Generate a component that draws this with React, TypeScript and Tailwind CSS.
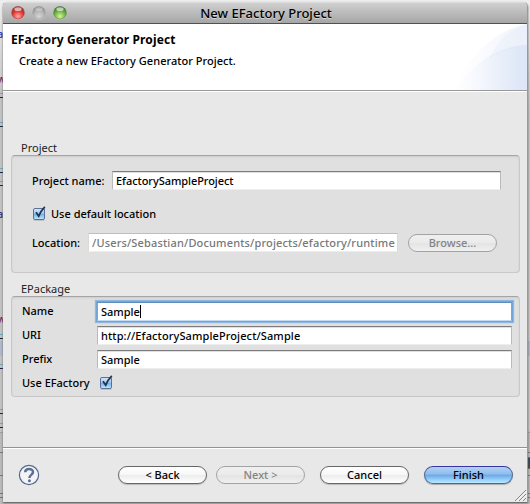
import type { ReactNode } from "react";

function Light({ kind }: { kind: "red" | "gray" | "green" }) {
  const tones = {
    red: ["#8f2d2b", "#e23b37", "#ffaaa0"],
    gray: ["#8d8d8d", "#b5b5b5", "#d6d6d6"],
    green: ["#3f6f2b", "#70b544", "#d8f59a"],
  }[kind];
  return (
    <svg width="15" height="15" viewBox="0 0 15 15">
      <defs>
        <radialGradient id={kind} cx="50%" cy="78%" r="75%">
          <stop offset="0" stopColor={tones[2]} />
          <stop offset="0.55" stopColor={tones[1]} />
          <stop offset="1" stopColor={tones[0]} />
        </radialGradient>
      </defs>
      <circle cx="8" cy="8.3" r="6.8" fill="#e4e4e4" opacity="0.7" />
      <circle cx="8" cy="7.8" r="6.4" fill={`url(#${kind})`} stroke={tones[0]} strokeOpacity="0.65" strokeWidth="0.8" />
      <ellipse cx="8" cy="4.2" rx="3.6" ry="1.9" fill="#fff" opacity={kind === "gray" ? 0.3 : 0.6} />
    </svg>
  );
}

function Check() {
  return (
    <svg width="15" height="16" viewBox="0 0 15 16" className="shrink-0">
      <defs>
        <linearGradient id="aqua" x1="0" y1="0" x2="0" y2="1">
          <stop offset="0" stopColor="#d9eafa" />
          <stop offset="0.45" stopColor="#9cc8f2" />
          <stop offset="0.5" stopColor="#6eaee9" />
          <stop offset="1" stopColor="#c0f0ff" />
        </linearGradient>
      </defs>
      <rect x="1.5" y="2.5" width="11" height="11" rx="1.5" fill="url(#aqua)" stroke="#5b6f9a" />
      <path d="M1.5 14.3h11" stroke="#777" strokeWidth="0.7" opacity="0.5" />
      <path d="M4 6.2 6.7 10.2Q9 4.5 12.8 0.8" fill="none" stroke="#22344f" strokeWidth="1.8" />
    </svg>
  );
}

function Field({ children, width = "", state = "normal" }: { children: ReactNode; width?: string; state?: "normal" | "focus" | "disabled" }) {
  const look = {
    normal: "border-x-[#b9b9b9] border-t-[#7c7c7c] border-b-[#eeeeee] shadow-[inset_0_1px_0_#e0e0e0]",
    focus: "relative border-x-[#79a6d6] border-t-[#5f8fc0] border-b-[#c3dbf2] shadow-[0_0_0_1px_#74a5d8,0_0_1px_2px_#8fb8e3]",
    disabled: "border-x-[#dadada] border-t-[#bebebe] border-b-[#ededed] text-[#777]",
  }[state];
  return (
    <div className={`flex h-[19px] items-center overflow-hidden border bg-white pl-[3px] whitespace-nowrap ${look} ${width}`}>
      {children}
    </div>
  );
}

function Button({ children, disabled = false, primary = false }: { children: ReactNode; disabled?: boolean; primary?: boolean }) {
  const look = primary
    ? "border-[#4d6692] border-t-[#36369f] bg-[linear-gradient(#b3d1f3_0%,#8fbcee_45%,#68a8e6_50%,#a5dbff_88%,#bceaff_100%)] text-black shadow-[0_1px_1px_#aaa]"
    : disabled
      ? "border-[#a3a3a3] bg-[linear-gradient(#efefef_0%,#ebebeb_47%,#e3e3e3_50%,#f0f0f0_100%)] text-[#848484]"
      : "border-[#666] bg-[linear-gradient(#ffffff_0%,#f7f7f7_47%,#ececec_50%,#ffffff_100%)] text-black shadow-[0_1px_1px_#bbb]";
  return (
    <div className={`flex h-[18px] w-[89px] shrink-0 items-center justify-center rounded-full border ${look}`}>
      {children}
    </div>
  );
}

const groupBox =
  "rounded-[4px] border border-[#c8c8c8] border-t-[#a5a5a5] bg-[#e0e0e0] shadow-[inset_0_1px_2px_#cccccc]";

const fragments = [
  [28, "a", "text-[#3030c0]"],
  [73, "w", "text-[#7b2058]"],
  [208, "a", "text-[#303080]"],
  [313, "w", "text-[#7b2058]"],
] as const;

const dashes = [94, 123, 169, 182, 335, 365, 410, 424];

export default function App() {
  return (
    <div className="relative h-[504px] w-[530px] overflow-hidden bg-[#c2c2c2] font-['Noto_Sans','Open_Sans',sans-serif] text-[11px] leading-[14px] font-medium text-black">
      <div className="absolute inset-x-0 top-0 h-[3px] bg-[#eeeeee]" />
      <div className="absolute top-0 left-0 h-[90px] w-[3px] bg-[linear-gradient(#eeeeee,#c8c8c8)]" />
      <div className="absolute top-0 right-0 h-[430px] w-[3px] bg-[linear-gradient(#eeeeee,#c8c8c8_25%)]" />
      <div className="absolute top-[341px] left-0 h-[15px] w-[530px] bg-[#afb9c9]" />
      {fragments.map(([y, s, c]) => (
        <div key={y} className={`absolute -left-[3px] ${c}`} style={{ top: y - 1 }}>{s}</div>
      ))}
      {dashes.map((y) => (
        <div key={y} className="absolute left-0 h-[5px] w-[3px] border-t border-b border-t-[#6fabb7] border-b-[#17233e]" style={{ top: y - 1 }} />
      ))}
      <div className="absolute right-0 bottom-0 left-0 h-[72px] border-t border-[#a0a0a0] bg-[#bababa]" />
      {[452, 475, 493, 497].map((y) => (
        <div key={y} className="absolute inset-x-0 h-px bg-[#777]" style={{ top: y }} />
      ))}
      <div className="absolute top-[457px] right-0 h-[12px] w-[2px] border-y border-[#7d704a] bg-[#35475c]" />

      <div className="absolute top-[2px] left-[3px] flex h-[500px] w-[525px] flex-col overflow-hidden rounded-t-[5px] border-r border-r-[#999] bg-[#e8e8e8] shadow-[0_1px_2px_#555]">
        <div className="relative flex h-[22px] shrink-0 items-center justify-center border-t border-b border-t-[#dddddd] border-b-[#515151] bg-[linear-gradient(#cfcfcf,#a6a6a6)]">
          <div className="absolute top-[2px] left-[7px] flex gap-[6px]">
            <Light kind="red" />
            <Light kind="gray" />
            <Light kind="green" />
          </div>
          <span className="pl-[2px] text-[13px] tracking-[0.02px] [text-shadow:0_1px_0_#d5d5d5]">New EFactory Project</span>
        </div>

        <div className="relative h-[67px] shrink-0 border-b border-[#989898] bg-white">
          <svg className="absolute top-0 right-0" width="75" height="66" viewBox="0 0 75 66">
            <defs>
              <linearGradient id="swoosh" x1="0" x2="1" y1="0" y2="0">
                <stop offset="0" stopColor="#dce5f7" stopOpacity="0" />
                <stop offset="0.3" stopColor="#dce5f7" stopOpacity="0.18" />
                <stop offset="0.9" stopColor="#d2def5" stopOpacity="0.6" />
                <stop offset="1" stopColor="#d2def5" stopOpacity="0.6" />
              </linearGradient>
            </defs>
            <path d="M2 66C16 35 39 7 75 0V66Z" fill="url(#swoosh)" opacity="0.55" />
            <path d="M4 66C21 39 46 22 75 21V66Z" fill="url(#swoosh)" />
            <path d="M37 35C45 18 56 6 75 0V21C59 23 47 28 37 35Z" fill="#dce5f7" opacity="0.24" />
          </svg>
          <div className="pt-[9px] pl-[8px] text-[12px] leading-[14px] font-bold tracking-[0.13px]"><span>EFactory Generator Project</span></div>
          <div className="pt-[7px] pl-[16px] tracking-[0.03px]"><span>Create a new EFactory Generator Project.</span></div>
        </div>

        <div className="flex h-[356px] shrink-0 flex-col border-t border-white px-[8px] pt-[49px]">
          <div className="h-[14px] pl-[10px] font-normal text-[#222]"><span>Project</span></div>
          <div className={`h-[118px] w-[509px] shrink-0 ${groupBox}`}>
            <div className="flex items-center pt-[15px] pl-[20px]">
              <span className="w-[80px]">Project name:</span>
              <Field width="w-[389px]"><span className="tracking-[-0.06px]">EfactorySampleProject</span></Field>
            </div>
            <div className="mt-[16px] flex h-[16px] items-center pl-[20px]">
              <Check />
              <span className="ml-[4px]">Use default location</span>
            </div>
            <div className="mt-[11px] flex items-center pl-[20px]">
              <span className="w-[56px]">Location:</span>
              <Field width="w-[310px]" state="disabled"><span className="tracking-[0.16px]">/Users/Sebastian/Documents/projects/efactory/runtime</span></Field>
              <span className="ml-[10px]"><Button disabled>Browse...</Button></span>
            </div>
          </div>
          <div className="mt-[9px] h-[14px] pl-[10px] font-normal text-[#222]"><span>EPackage</span></div>
          <div className={`h-[101px] w-[509px] shrink-0 ${groupBox}`}>
            <div className="grid grid-cols-[75px_415px] gap-y-[5px] pt-[5px] pl-[10px]">
              <span className="pt-[2px]">Name</span>
              <Field state="focus">
                <span>Sample</span><span className="h-[13px] w-px bg-black" />
              </Field>
              <span className="pt-[2px]">URI</span>
              <Field><span className="tracking-[0.11px]">http://EfactorySampleProject/Sample</span></Field>
              <span className="pt-[2px]">Prefix</span>
              <Field><span>Sample</span></Field>
            </div>
            <div className="mt-[6px] flex h-[16px] items-center pl-[10px]">
              <span className="w-[77px]">Use EFactory</span>
              <Check />
            </div>
          </div>
        </div>

        <div className="relative flex h-[55px] shrink-0 border-t border-[#929292] pt-[18px] pl-[15px] shadow-[inset_0_1px_0_white]">
          <svg width="22" height="22" viewBox="0 0 22 22" className="-mt-[2px] shrink-0">
            <circle cx="11" cy="11" r="9.6" fill="#f4f4f6" stroke="#53698f" strokeWidth="1.2" />
            <path d="M7.2 8.3C7.2 4 15 4 15 8.1C15 11 11.4 10.8 11.4 14" fill="none" stroke="#5c7095" strokeWidth="2.5" />
            <circle cx="11.4" cy="16.7" r="1.5" fill="#5c7095" />
          </svg>
          <div className="ml-[78px] flex gap-[9px]">
            <Button><span>&lt; Back</span></Button>
            <Button disabled><span>Next &gt;</span></Button>
          </div>
          <div className="ml-[15px] flex gap-[15px]">
            <Button><span>Cancel</span></Button>
            <Button primary><span>Finish</span></Button>
          </div>
          <svg className="absolute right-0 bottom-0" width="13" height="13" viewBox="0 0 13 13">
            <path d="M1 12 12 1M5 12 12 5M9 12 12 9" stroke="#858585" />
            <path d="M2 12.5 12.5 2M6 12.5 12.5 6" stroke="#fff" strokeWidth="0.6" />
          </svg>
        </div>
      </div>
    </div>
  );
}
